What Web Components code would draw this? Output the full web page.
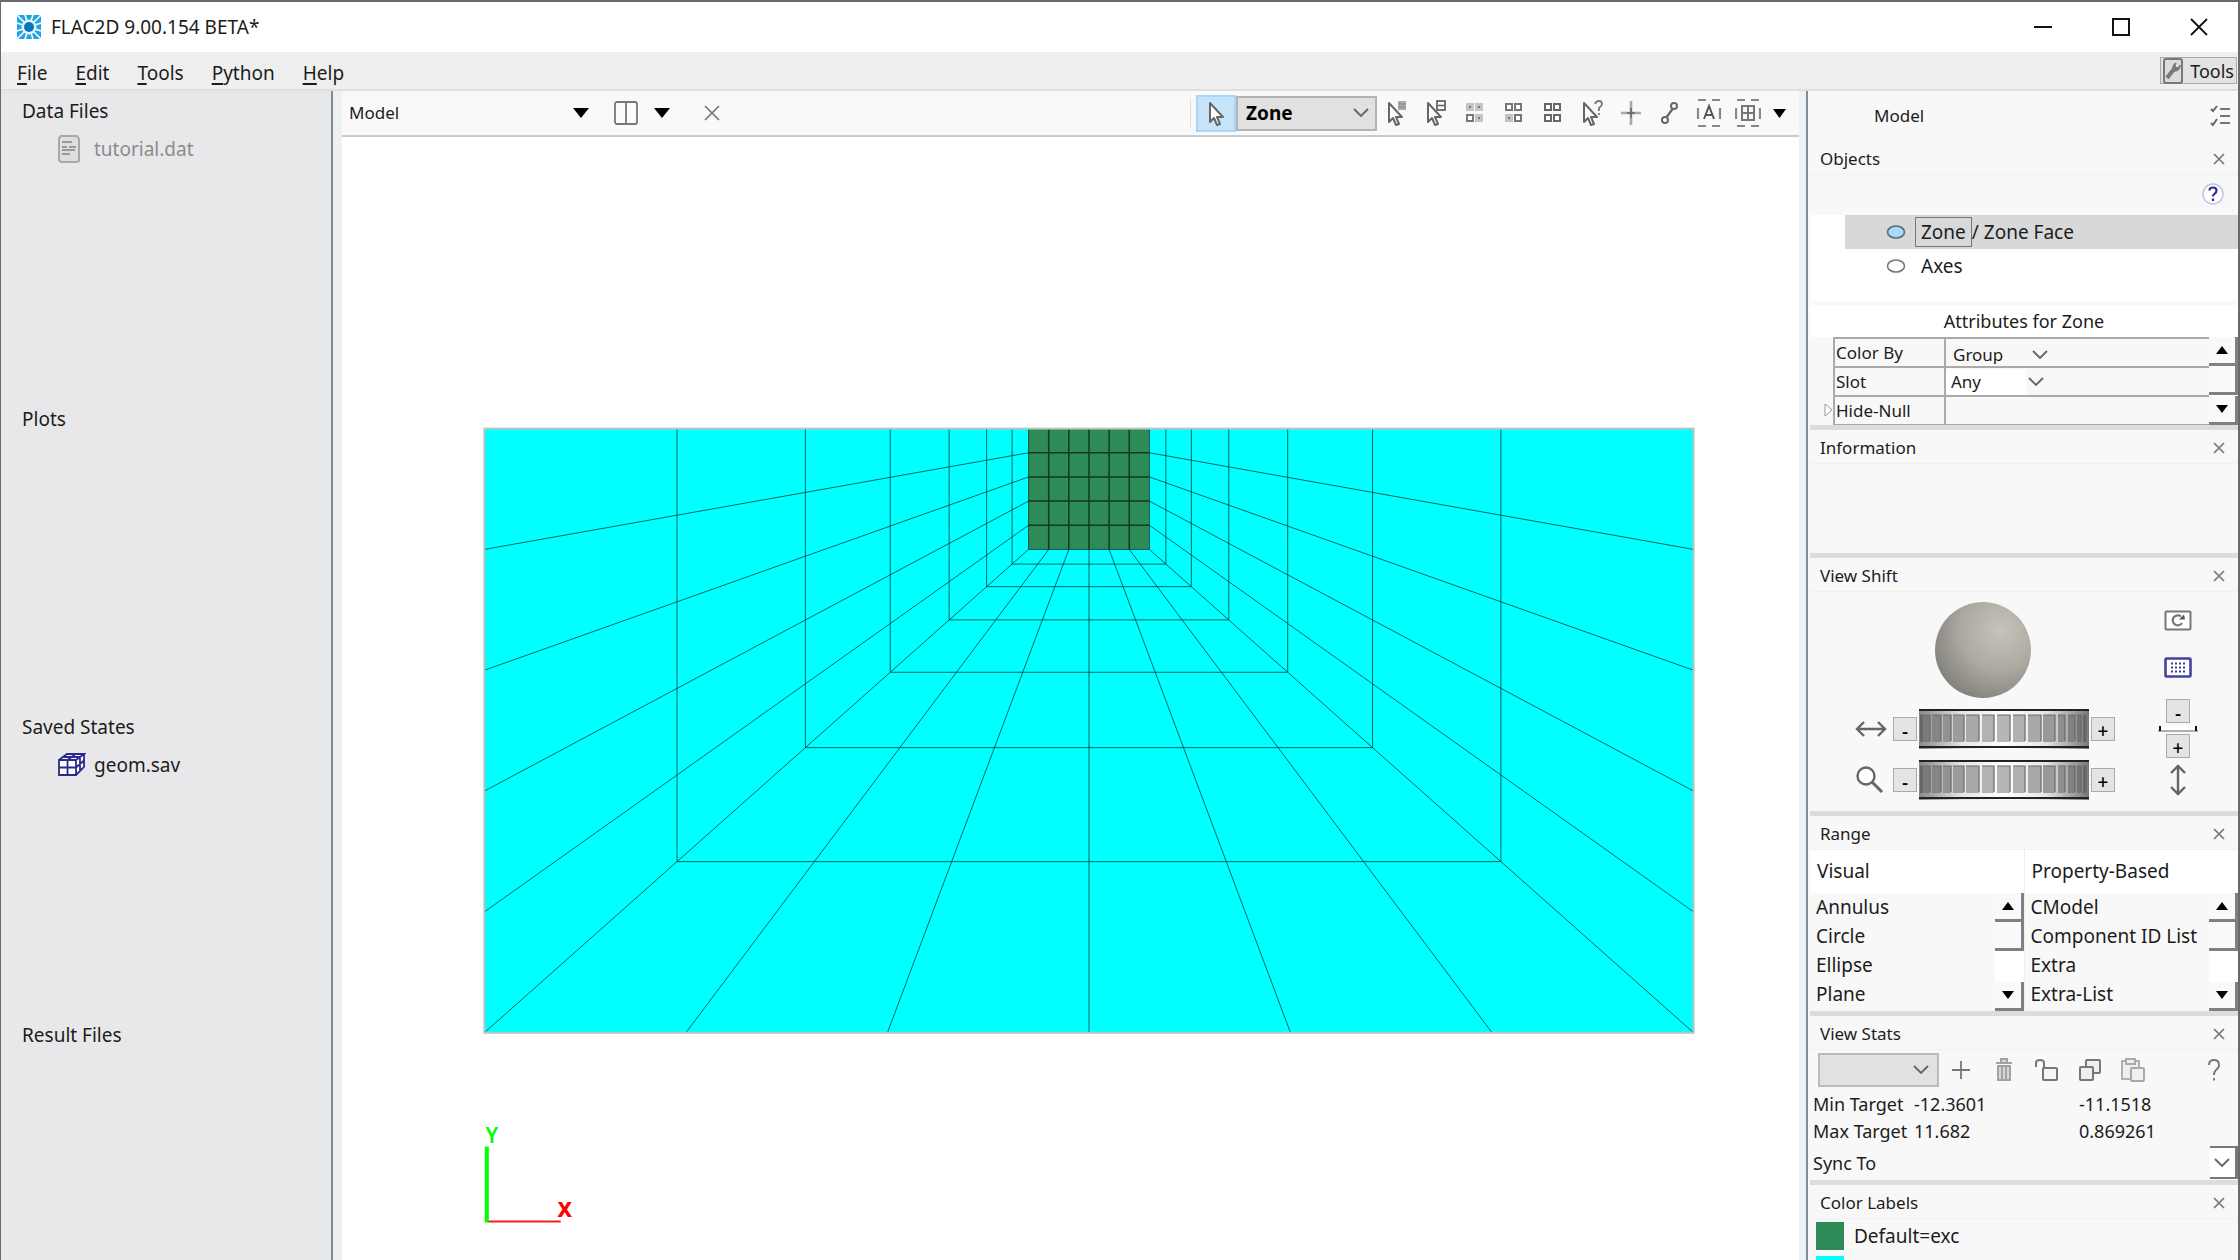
<!DOCTYPE html>
<html lang="en">
<head>
<meta charset="utf-8">
<title>FLAC2D 9.00.154 BETA*</title>
<style>
html, body { margin: 0; height: 100%; }
body { font-family: "Noto Sans", "Open Sans", sans-serif; font-size: 19px; line-height: 24px; color: #1c1c1c; background: #f8f8f8; overflow: hidden; }
</style>
</head>
<body>
<flac-app></flac-app>
<script>
const BASE = `<style>
*, *::before, *::after { box-sizing: border-box; }
button { font: inherit; color: inherit; background: none; border: 0; padding: 0; margin: 0; display: inline-flex; align-items: center; justify-content: center; }
select { font: inherit; color: inherit; appearance: none; background: none; border: 0; border-radius: 0; margin: 0; padding: 0; outline: 0; }
</style>`;

function define(name, css, html, ready) {
  const tpl = document.createElement('template');
  tpl.innerHTML = BASE + '<style>' + css + '</style>' + html;
  customElements.define(name, class extends HTMLElement {
    constructor() {
      super();
      this.attachShadow({ mode: 'open' }).append(tpl.content.cloneNode(true));
    }
    connectedCallback() {
      if (ready && !this.done) { this.done = true; ready(this, this.shadowRoot); }
    }
  });
}

/* Icons: [width, height, markup] */
const ARROW = '<path d="M5 3v19l4-4 3 7 3-1-3-7h6z" fill="#fff" stroke="#666" stroke-width="2" stroke-linejoin="round"/>';
const sq = (x, y, c) => `<rect x="${x}" y="${y}" width="6" height="6" fill="#fff" stroke="${c}" stroke-width="2"/>`;
const dim = (x, y) => `<rect x="${x - 1}" y="${y - 1}" width="8" height="8" fill="#c4c4c4"/><rect x="${x + 2}" y="${y + 2}" width="2" height="2" fill="#777"/>`;
const ICONS = {
  logo: [26, 26, '<rect x="1" y="1" width="24" height="24" rx="1" fill="#1ea5e6"/><path d="M1 1l24 24M25 1L1 25M9 1l8 24M17 1L9 25M1 9l24 8M1 17l24-8" stroke="#fff" stroke-width="1.6"/><circle cx="13" cy="13" r="7.5" fill="#e4f5fd"/><circle cx="13" cy="13" r="5" fill="#0a73c0"/>'],
  min: [20, 20, '<path d="M1 10h18" stroke="#111" stroke-width="2"/>'],
  max: [20, 20, '<rect x="2" y="2" width="16" height="16" fill="none" stroke="#111" stroke-width="2"/>'],
  cross: [20, 20, '<path d="M2 2l16 16M18 2L2 18" stroke="#111" stroke-width="1.8"/>'],
  close: [12, 12, '<path d="M1 1l10 10M11 1L1 11" stroke="#777" stroke-width="1.7"/>'],
  closeview: [16, 16, '<path d="M1 1l14 14M15 1L1 15" stroke="#777" stroke-width="1.7"/>'],
  wrench: [20, 26, '<rect x="1" y="1" width="18" height="24" rx="2" fill="#dcdcdc" stroke="#777" stroke-width="2"/><path d="M4 20l7-9" stroke="#777" stroke-width="4"/><path d="M11 13a5 5 0 0 1 2-8l-1 4 3 1 2-3a5 5 0 0 1-6 6z" fill="#777" stroke="#777"/>'],
  file: [22, 28, '<path d="M3 1h16l2 3v22l-2 1H3l-2-2V3z" fill="#dedede" stroke="#a8a8a8" stroke-width="2"/><path d="M4 7h10M4 12h5M11 12h7M4 15h13M4 19h8" stroke="#999" stroke-width="1.8"/>'],
  cube: [28, 24, '<path d="M1 8l8-7h17v13l-7 9H1z" fill="#fff"/><path d="M1 7h17v15H1zM1 7l8-6h17l-8 6M26 1v13l-8 8M1 14.500h17l8-7M9.500 7v15M9.500 7l8-6M5 4h17v14" fill="none" stroke="#2a2a8c" stroke-width="1.8"/>'],
  caret: [16, 10, '<path d="M0 0h16l-8 10z" fill="#000"/>'],
  caretsm: [13, 9, '<path d="M0 0h13l-6.500 9z" fill="#000"/>'],
  up: [12, 8, '<path d="M0 8h12L6 0z" fill="#000"/>'],
  down: [12, 8, '<path d="M0 0h12L6 8z" fill="#000"/>'],
  chevron: [16, 10, '<path d="M1 1l7 7 7-7" fill="none" stroke="#666" stroke-width="1.9"/>'],
  columns: [24, 24, '<rect x="1" y="1" width="22" height="22" rx="2" fill="#fbfbfb" stroke="#777" stroke-width="1.8"/><path d="M12 1v22" stroke="#777" stroke-width="1.8"/>'],
  pointer: [22, 27, ARROW],
  ptrlist: [26, 27, ARROW + '<rect x="14" y="1" width="8" height="9" fill="#aaa"/><path d="M14 4h8M14 7h8" stroke="#888"/>'],
  ptrbox: [26, 27, ARROW + '<rect x="14" y="1" width="8" height="9" fill="#fff" stroke="#666" stroke-width="1.8"/><path d="M15 5.500h6" stroke="#666" stroke-width="1.6"/>'],
  grid1: [20, 22, dim(2, 2) + dim(11, 2) + sq(2, 13, '#777') + dim(11, 13)],
  grid2: [20, 22, sq(2, 2, '#777') + sq(11, 2, '#777') + dim(2, 13) + sq(11, 13, '#777')],
  grid3: [20, 22, sq(2, 2, '#666') + sq(11, 2, '#666') + sq(2, 13, '#666') + sq(11, 13, '#666')],
  ptrask: [26, 27, ARROW + '<path d="M16 4q1-3 4-3 3 0 3 3 0 2-3 4v3M20 13v2" fill="none" stroke="#777" stroke-width="1.8"/>'],
  plus4: [22, 26, '<path d="M11 1v24M1 13h20" stroke="#aaa" stroke-width="2.600"/><path d="M11 8v10M7 13h8" stroke="#666" stroke-width="1.500"/>'],
  link: [20, 24, '<path d="M6 17l8-11" stroke="#666" stroke-width="2.200"/><circle cx="14" cy="5" r="3" fill="#fff" stroke="#666" stroke-width="2"/><circle cx="5" cy="19" r="3" fill="#fff" stroke="#666" stroke-width="2"/>'],
  label: [26, 30, '<path d="M2 2h8M16 2h8M2 28h8M16 28h8M2 10v11M24 10v11" stroke="#888" stroke-width="2.200"/><path d="M8 21l5-13 5 13M10 17h6" fill="none" stroke="#555" stroke-width="2"/>'],
  gridsel: [26, 30, '<path d="M2 2h8M16 2h8M2 28h8M16 28h8M1 10v11M25 10v11" stroke="#888" stroke-width="2.200"/><path d="M7 8h12v14H7zM13 8v14M7 15h12" fill="none" stroke="#777" stroke-width="2"/>'],
  checks: [20, 22, '<path d="M10 4h10M10 11h10M10 18h10" stroke="#777" stroke-width="2"/><path d="M1 4l2 2 4-5M1 18l2 2 4-6" fill="none" stroke="#666" stroke-width="2"/>'],
  eyeon: [20, 16, '<ellipse cx="10" cy="8" rx="8.500" ry="6" fill="#a9d8fb" stroke="#5b6b78" stroke-width="1.6"/>'],
  eye: [20, 16, '<ellipse cx="10" cy="8" rx="8.500" ry="6" fill="#fff" stroke="#777" stroke-width="1.6"/>'],
  twist: [9, 14, '<path d="M1 1v12l7-6z" fill="#fff" stroke="#999"/>'],
  reset: [28, 22, '<rect x="1.500" y="1.500" width="25" height="18" rx="1" fill="#fff" stroke="#777" stroke-width="2"/><path d="M17 6.500a5 5 0 1 0 1 6.500" fill="none" stroke="#777" stroke-width="2.200"/><path d="M15 9.500h6l-1-5z" fill="#555"/>'],
  planar: [28, 22, '<rect x="1.500" y="1.500" width="25" height="18" rx="1" fill="#fff" stroke="#41429a" stroke-width="2.600"/><path d="M7 6.500h14M7 10.500h14M7 14.500h14" stroke="#3c3c96" stroke-width="2" stroke-dasharray="2 2"/>'],
  horiz: [32, 18, '<path d="M2 9h28M9 2L2 9l7 7M23 2l7 7-7 7" fill="none" stroke="#666" stroke-width="2.400"/>'],
  vert: [18, 32, '<path d="M9 2v28M2 9l7-7 7 7M2 23l7 7 7-7" fill="none" stroke="#666" stroke-width="2.400"/>'],
  zoom: [30, 28, '<circle cx="11" cy="10" r="8.500" fill="#fff" stroke="#666" stroke-width="2.400"/><path d="M17 16l10 10" stroke="#666" stroke-width="3"/>'],
  sphere: [96, 96, '<defs><radialGradient id="s" cx=".68" cy=".3" r=".75"><stop offset="0" stop-color="#c6c3ba"/><stop offset=".55" stop-color="#aca9a1"/><stop offset="1" stop-color="#84837d"/></radialGradient></defs><circle cx="48" cy="48" r="48" fill="url(#s)"/>'],
  ridge: [40, 8, '<path d="M2 1h36v4H2z" fill="#fff"/><path d="M0 6h40" stroke="#999" stroke-width="1.500"/><path d="M2 1v5M38 1v5" stroke="#111" stroke-width="2"/>'],
  add: [20, 20, '<path d="M10 1v18M1 10h18" stroke="#777" stroke-width="1.800"/>'],
  trash: [18, 24, '<path d="M1 5h16M6 4V1h6v3M3 8v14h12V8z" fill="#d6d6d6" stroke="#a2a2a2" stroke-width="2"/><path d="M7 8v13M11 8v13" stroke="#999" stroke-width="1.600"/>'],
  unlock: [24, 22, '<path d="M1 8V4q0-3 4-3t4 3v6" fill="none" stroke="#777" stroke-width="2"/><rect x="8" y="9" width="14" height="12" rx="1" fill="#f5f5f5" stroke="#777" stroke-width="2"/>'],
  copy: [22, 22, '<rect x="7" y="1" width="14" height="13" rx="1" fill="#eee" stroke="#777" stroke-width="2"/><rect x="1" y="8" width="13" height="13" rx="1" fill="#eee" stroke="#777" stroke-width="2"/>'],
  paste: [24, 24, '<path d="M1 3h17v18H1z" fill="#eee" stroke="#b0b0b0" stroke-width="2"/><rect x="5" y="1" width="9" height="5" fill="#eee" stroke="#aaa" stroke-width="2"/><rect x="10" y="10" width="13" height="13" rx="1" fill="#f0f0f0" stroke="#aaa" stroke-width="2"/>'],
  ask: [14, 22, '<path d="M2 6q0-5 5-5t5 5q0 3-3 5-2 1.500-2 5M7 19v2.500" fill="none" stroke="#777" stroke-width="1.900"/>'],
  help: [22, 22, '<circle cx="11" cy="11" r="10" fill="#fff" stroke="#c3c3e4" stroke-width="1.500"/><path d="M7.500 7.500q0-3 3.500-3t3.500 3q0 2-2 3.300-1.500 1-1.500 2.700M11 15.500v2.500" fill="none" stroke="#2d2d94" stroke-width="2.200"/>']
};
const SLATS = [[1, 3, '#666'], [5, 6, '#7a7a7a'], [13, 9, '#858585'], [24, 8, '#929292'], [34, 11, '#9c9c9c'], [47, 13, '#a9a9a9'], [63, 12, '#b2b2b2'], [78, 13, '#b6b6b6'], [94, 12, '#b0b0b0'], [109, 13, '#a8a8a8'], [124, 12, '#9a9a9a'], [139, 7, '#8e8e8e'], [149, 7, '#808080'], [158, 4, '#747474'], [164, 3, '#666']];
ICONS.wheel = [170, 40, '<defs><linearGradient id="w"><stop offset="0" stop-color="#888"/><stop offset=".25" stop-color="#e4e4e4"/><stop offset=".5" stop-color="#fff"/><stop offset=".75" stop-color="#e4e4e4"/><stop offset="1" stop-color="#777"/></linearGradient></defs><rect width="170" height="40" fill="url(#w)"/>' +
  SLATS.map(([x, w, c]) => `<rect x="${x}" y="6" width="${w}" height="27" fill="${c}"/><path d="M${x} 6h${w}v26" fill="none" stroke="#6a6a6a" stroke-width="1.2"/>`).join('') +
  '<path d="M0 1h170M0 38h170" stroke="#222" stroke-width="2"/>'];

define('ui-icon', ':host { display: inline-flex; flex: none; } svg { display: block; }', '', (el, root) => {
  const [w, h, body] = ICONS[el.getAttribute('name')];
  const box = document.createElement('template');
  box.innerHTML = `<svg width="${w}" height="${h}" viewBox="0 0 ${w} ${h}" aria-hidden="true">${body}</svg>`;
  root.append(box.content);
});

/* Drop-down whose arrow shares the grid cell with the native select */
define('ui-select', `
:host { display: inline-grid; align-items: center; }
select { grid-area: 1 / 1; width: 100%; height: 100%; }
ui-icon { grid-area: 1 / 1; justify-self: end; pointer-events: none; margin-right: var(--arrow-gap, 8px); }
`, '<select></select>', (el, root) => {
  const s = root.querySelector('select');
  s.setAttribute('aria-label', el.getAttribute('label'));
  s.style.paddingLeft = 'var(--pad, 0)';
  s.add(new Option(el.getAttribute('value') || ''));
  const i = document.createElement('ui-icon');
  i.setAttribute('name', el.getAttribute('arrow') || 'chevron');
  root.append(i);
});

define('title-bar', `
:host { display: flex; align-items: center; height: 50px; background: #fff; padding-left: 15px; }
h1 { font: inherit; margin: 0 0 0 9px; flex: 1; }
button { width: 78px; height: 50px; }
`, `<ui-icon name="logo"></ui-icon><h1>FLAC2D 9.00.154 BETA*</h1>
<button aria-label="Minimize"><ui-icon name="min"></ui-icon></button>
<button aria-label="Maximize"><ui-icon name="max"></ui-icon></button>
<button aria-label="Close"><ui-icon name="cross"></ui-icon></button>`);

define('menu-bar', `
:host { display: flex; align-items: center; justify-content: space-between; height: 39px; background: #efefef; border-bottom: 2px solid #e0e0e0; }
nav { display: flex; gap: 28px; padding: 5px 0 0 16px; }
u { text-underline-offset: 3px; text-decoration-thickness: 2px; }
.tools { height: 27px; margin: 0 1px 0 0; padding: 0 2px; gap: 7px; border: 1px solid #aaa; background: #e2e2e2; font-size: 18px; }
`, `<nav><button><span><u>F</u>ile</span></button><button><span><u>E</u>dit</span></button><button><span><u>T</u>ools</span></button><button><span><u>P</u>ython</span></button><button><span><u>H</u>elp</span></button></nav>
<button class="tools"><ui-icon name="wrench"></ui-icon>Tools</button>`);

define('file-section', `
:host { display: block; min-height: 308px; padding-left: 21px; }
h2 { font: inherit; margin: 0; line-height: 40px; }
::slotted(*) { margin-left: 35px; }
`, '<h2></h2><slot></slot>', (el, root) => { root.querySelector('h2').textContent = el.getAttribute('heading'); });

define('file-item', `
:host { display: flex; align-items: center; height: 36px; }
:host([muted]) { color: #8c8c8c; }
.i { width: 37px; display: flex; }
.i > * { margin-left: 1px; }
`, '<span class="i"></span><slot></slot>', (el, root) => {
  const i = document.createElement('ui-icon');
  i.setAttribute('name', el.getAttribute('icon'));
  root.querySelector('.i').append(i);
});

define('file-panel', `
:host { display: block; width: 332px; flex: none; background: #e8e8ea; border-right: 2px solid #7c8d99; overflow: hidden; }
`, `<file-section heading="Data Files"><file-item icon="file" muted>tutorial.dat</file-item></file-section>
<file-section heading="Plots"></file-section>
<file-section heading="Saved States"><file-item icon="cube">geom.sav</file-item></file-section>
<file-section heading="Result Files"></file-section>`);

define('view-toolbar', `
:host { display: flex; align-items: center; height: 46px; background: #f9f9f9; border-bottom: 2px solid #cbcbcb; }
.name { width: 247px; height: 34px; font-size: 17px; --pad: 7px; --arrow-gap: 0px; }
.cols { margin-left: 25px; gap: 16px; }
.x { margin-left: 34px; }
.spacer { flex: 1; }
.sep { width: 1px; height: 28px; background: #ddd; margin-right: 5px; }
.sel { width: 40px; height: 37px; background: #c5e3f9; border: 2px solid #a9d5f6; }
.zone { width: 141px; height: 35px; border: 2px solid #b4b4b4; background: #e1e1e1; font-weight: bold; color: #000; --pad: 8px; --arrow-gap: 6px; }
.t { width: 39px; height: 37px; }
.more { width: 30px; height: 37px; margin-right: 2px; }
.more ui-icon { margin-right: 6px; }
`, `<ui-select class="name" label="View" value="Model" arrow="caret"></ui-select>
<button class="cols" aria-label="Split view"><ui-icon name="columns"></ui-icon><ui-icon name="caret"></ui-icon></button>
<button class="x" aria-label="Close view"><ui-icon name="closeview"></ui-icon></button>
<span class="spacer"></span><span class="sep"></span>
<button class="sel" aria-label="Select"><ui-icon name="pointer"></ui-icon></button>
<ui-select class="zone" label="Selection type" value="Zone"></ui-select>
<button class="t" aria-label="Pick list"><ui-icon name="ptrlist"></ui-icon></button>
<button class="t" aria-label="Pick box"><ui-icon name="ptrbox"></ui-icon></button>
<button class="t" aria-label="Select none"><ui-icon name="grid1"></ui-icon></button>
<button class="t" aria-label="Invert"><ui-icon name="grid2"></ui-icon></button>
<button class="t" aria-label="Select all"><ui-icon name="grid3"></ui-icon></button>
<button class="t" aria-label="Query"><ui-icon name="ptrask"></ui-icon></button>
<button class="t" aria-label="Center"><ui-icon name="plus4"></ui-icon></button>
<button class="t" aria-label="Measure"><ui-icon name="link"></ui-icon></button>
<button class="t" aria-label="Label"><ui-icon name="label"></ui-icon></button>
<button class="t" aria-label="Grid"><ui-icon name="gridsel"></ui-icon></button>
<button class="more" aria-label="More"><ui-icon name="caretsm"></ui-icon></button>`);

/* Radially graded mesh around the excavated block */
define('mesh-plot', ':host { display: block; flex: 1; min-height: 0; background: #fff; } svg { display: block; width: 100%; height: 100%; }', '', (el, root) => {
  const cx = 748, top = 292, IN = 60.5, OUT = 605.5, depthIn = 121, depthOut = 605;
  const rings = [60.5, 77, 102.5, 140, 199, 284, 412.5];
  let d = '';
  for (const w of rings) {
    const y = top + depthIn + (w - IN) * (depthOut - depthIn) / (OUT - IN);
    d += `M${cx - w} ${top}V${y}H${cx + w}V${top}`;
  }
  for (let k = -3; k <= 3; k++) d += `M${cx + k * IN / 3} ${top + depthIn}L${cx + k * OUT / 3} ${top + depthOut}`;
  for (let k = 1; k < 5; k++) for (const s of [-1, 1]) d += `M${cx + s * IN} ${top + k * depthIn / 5}L${cx + s * OUT} ${top + k * depthOut / 5}`;
  let g = '';
  for (let k = -2; k <= 2; k++) g += `M${cx + k * IN / 3} ${top}v${depthIn}`;
  for (let k = 1; k < 5; k++) g += `M${cx - IN} ${top + k * depthIn / 5}h${2 * IN}`;
  const box = document.createElement('template');
  box.innerHTML = `<svg viewBox="0 0 1459 1122" preserveAspectRatio="xMidYMin meet">
<rect x="${cx - OUT}" y="${top}" width="${2 * OUT}" height="${depthOut}" fill="#0ff"/>
<rect x="${cx - IN}" y="${top}" width="${2 * IN}" height="${depthIn}" fill="#2e8b57"/>
<path d="${d}" fill="none" stroke="#003c3c" stroke-opacity=".8"/>
<path d="${g}" fill="none" stroke="#123a22" stroke-width="1.5"/>
<rect x="${cx - OUT}" y="${top}" width="${2 * OUT}" height="${depthOut}" fill="none" stroke="#b9c6c2" stroke-width="2"/>
<path d="M146 1086h73" stroke="#f02020" stroke-width="2"/>
<path d="M145 1011v76" stroke="#0f0" stroke-width="4"/>
<text x="150" y="1007" text-anchor="middle" font-size="21" font-weight="600" fill="#0f0">Y</text>
<text x="223" y="1081" text-anchor="middle" font-size="21" font-weight="800" fill="#f00">X</text></svg>`;
  root.append(box.content);
});

define('dock-section', `
:host { display: block; border-bottom: 5px solid #dcdcdc; }
header { display: flex; align-items: center; justify-content: space-between; height: 34px; padding: 2px 13px 0 10px; font-size: 17px; border-bottom: 1px solid #f1f1f1; }
h2 { font: inherit; margin: 0; }
button { width: 12px; height: 24px; }
`, '<header><h2></h2><button aria-label="Close panel"><ui-icon name="close"></ui-icon></button></header><slot></slot>', (el, root) => { root.querySelector('h2').textContent = el.getAttribute('heading'); });

define('classic-scroll', `
:host { display: flex; flex-direction: column; width: 29px; }
button, i { height: 29px; border: solid #808080; border-width: 0 3px 3px 0; background: #f9f9f9; flex: none; }
.track { flex: 1; background: #fff; }
`, '<button aria-label="Scroll up"><ui-icon name="up"></ui-icon></button><i></i><span class="track"></span><button aria-label="Scroll down"><ui-icon name="down"></ui-icon></button>');

define('object-tree', `
:host { display: block; }
.help { display: flex; justify-content: flex-end; align-items: center; height: 40px; padding: 0 14px 3px 0; }
ul { list-style: none; margin: 0; padding: 0 0 18px 35px; background: #fff; }
li { display: flex; align-items: center; height: 34px; padding-left: 41px; }
li.on { background: #d8d8d8; }
li span { padding: 0 5px; line-height: 28px; border: 1px solid transparent; margin-left: 9px; }
li.on span { border-color: #777; }
b { font-weight: normal; white-space: pre; }
`, `<div class="help"><button aria-label="Help"><ui-icon name="help"></ui-icon></button></div>
<ul><li class="on"><ui-icon name="eyeon"></ui-icon><span>Zone</span><b>/ Zone Face</b></li>
<li><ui-icon name="eye"></ui-icon><span>Axes</span></li></ul>`);

define('attribute-table', `
:host { display: block; font-size: 17px; }
h3 { font: inherit; font-size: 18px; margin: 4px 0 0; line-height: 32px; text-align: center; background: #fff; }
.wrap { display: flex; height: 88px; overflow: hidden; }
table { border-collapse: collapse; flex: 1; table-layout: fixed; }
th, td { font-weight: normal; text-align: left; padding: 0; height: 29px; line-height: 24px; border: 2px solid #aaa; border-right: 0; }
th { width: 111px; padding: 1px 0 0 1px; }
td.tw { width: 24px; border: 0; text-align: right; }
.clip { height: 23px; overflow: hidden; }
.clip ui-select { width: 102px; height: 28px; --pad: 7px; --arrow-gap: 0px; }
.any { width: 98px; height: 26px; --pad: 5px; --arrow-gap: 0px; background: linear-gradient(90deg, #fff 80px, transparent 80px); vertical-align: top; }
`, `<h3>Attributes for Zone</h3><div class="wrap"><table>
<tr><td class="tw"></td><th>Color By</th><td><div class="clip"><ui-select label="Color By" value="Group"></ui-select></div></td></tr>
<tr><td class="tw"></td><th>Slot</th><td><ui-select class="any" label="Slot" value="Any"></ui-select></td></tr>
<tr><td class="tw"><ui-icon name="twist"></ui-icon></td><th>Hide-Null</th><td></td></tr></table>
<classic-scroll></classic-scroll></div>`);

define('view-shift', `
:host { display: flex; justify-content: space-between; height: 219px; padding: 10px 39px 0 45px; font-size: 19px; line-height: 20px; }
.left { display: flex; flex-direction: column; }
.left > ui-icon { margin: 0 0 11px 80px; }
.row { display: flex; align-items: center; height: 40px; margin-bottom: 11px; gap: 2px; }
.row > :first-child { width: 36px; }
.right { display: flex; flex-direction: column; align-items: center; width: 42px; padding-top: 8px; }
button.b { width: 24px; height: 24px; border: 1px solid #aaa; background: #e4e4e4; color: #000; padding-top: 3px; font-weight: 500; }
.g { margin-bottom: 25px; } .h { margin-bottom: 20px; } .v { margin-top: 6px; } .r { margin: 2px 0 1px; }
`, `<div class="left"><ui-icon name="sphere"></ui-icon>
<div class="row"><ui-icon name="horiz"></ui-icon><button class="b">-</button><ui-icon name="wheel"></ui-icon><button class="b">+</button></div>
<div class="row"><ui-icon name="zoom"></ui-icon><button class="b">-</button><ui-icon name="wheel"></ui-icon><button class="b">+</button></div></div>
<div class="right"><button class="g" aria-label="Reset"><ui-icon name="reset"></ui-icon></button><button class="h" aria-label="Planar"><ui-icon name="planar"></ui-icon></button>
<button class="b">-</button><ui-icon class="r" name="ridge"></ui-icon><button class="b">+</button><ui-icon class="v" name="vert"></ui-icon></div>`);

define('range-list', `
:host { display: block; flex: 1; }
:host(:not(:last-child)) { border-right: 1px solid #eee; }
h3 { font: inherit; margin: 0; padding-left: 7px; line-height: 43px; background: #fff; }
div { display: flex; justify-content: space-between; height: 118px; overflow: hidden; }
ul { list-style: none; margin: 0; padding: 0 0 0 6px; line-height: 29px; white-space: nowrap; }
`, '<h3></h3><div><ul></ul><classic-scroll></classic-scroll></div>', (el, root) => {
  root.querySelector('h3').textContent = el.getAttribute('heading');
  for (const t of el.getAttribute('items').split(',')) {
    const li = document.createElement('li');
    li.textContent = t;
    root.querySelector('ul').append(li);
  }
});

define('view-stats', `
:host { display: block; font-size: 18px; }
.bar { display: flex; align-items: center; height: 41px; padding: 0 17px 2px 8px; }
.bar button { width: 43px; height: 34px; }
.bar ui-select { width: 121px; height: 34px; border: 2px solid #bbb; background: #e1e1e1; }
.bar .q { margin-left: auto; width: 14px; }
dl { display: grid; grid-template-columns: 101px 165px 1fr; margin: 0; padding-left: 3px; line-height: 27px; }
dt, dd { margin: 0; white-space: nowrap; }
.sync { display: flex; justify-content: space-between; align-items: center; height: 35px; padding-left: 3px; }
.sync ui-select { width: 28px; height: 33px; border: solid #777; border-width: 2px 3px 2px 0; background: #fff; --arrow-gap: 5px; }
`, `<div class="bar"><ui-select label="Saved view" value=""></ui-select><button aria-label="Add"><ui-icon name="add"></ui-icon></button><button aria-label="Delete"><ui-icon name="trash"></ui-icon></button><button aria-label="Unlock"><ui-icon name="unlock"></ui-icon></button><button aria-label="Copy"><ui-icon name="copy"></ui-icon></button><button aria-label="Paste"><ui-icon name="paste"></ui-icon></button><button class="q" aria-label="Help"><ui-icon name="ask"></ui-icon></button></div>
<dl><dt>Min Target</dt><dd>-12.3601</dd><dd>-11.1518</dd><dt>Max Target</dt><dd>11.682</dd><dd>0.869261</dd></dl>
<div class="sync"><span>Sync To</span><ui-select label="Sync To" value=""></ui-select></div>`);

define('color-label', `
:host { display: flex; align-items: center; gap: 10px; height: 28px; margin: 3px 0 6px 6px; }
i { width: 28px; height: 28px; background: var(--swatch); }
`, '<i></i><slot></slot>');

define('tool-dock', `
:host { display: block; width: 432px; flex: none; background: #f8f8f8; border-left: 2px solid #7c8d99; padding-left: 2px; overflow: hidden; }
.top { display: flex; justify-content: space-between; align-items: center; height: 50px; padding: 0 8px 0 64px; font-size: 17px; }
.info { height: 89px; }
.range { display: flex; }
`, `<div class="top"><span>Model</span><button aria-label="Show panels"><ui-icon name="checks"></ui-icon></button></div>
<dock-section heading="Objects"><object-tree></object-tree><attribute-table></attribute-table></dock-section>
<dock-section heading="Information"><div class="info"></div></dock-section>
<dock-section heading="View Shift"><view-shift></view-shift></dock-section>
<dock-section heading="Range"><div class="range"><range-list heading="Visual" items="Annulus,Circle,Ellipse,Plane"></range-list><range-list heading="Property-Based" items="CModel,Component ID List,Extra,Extra-List"></range-list></div></dock-section>
<dock-section heading="View Stats"><view-stats></view-stats></dock-section>
<dock-section heading="Color Labels"><color-label style="--swatch:#2e8b57">Default=exc</color-label><color-label style="--swatch:#0ff"></color-label></dock-section>`);

define('flac-app', `
:host { display: flex; flex-direction: column; height: 100vh; border: solid #6a6a6a; border-width: 2px 2px 0 1px; overflow: hidden; box-sizing: border-box; }
main { display: flex; flex: 1; min-height: 0; }
section { display: flex; flex-direction: column; flex: 1; min-width: 0; border: solid #f0f0f0; border-width: 0 7px 0 9px; }
`, '<title-bar></title-bar><menu-bar></menu-bar><main><file-panel></file-panel><section><view-toolbar></view-toolbar><mesh-plot></mesh-plot></section><tool-dock></tool-dock></main>');
</script>
</body>
</html>
